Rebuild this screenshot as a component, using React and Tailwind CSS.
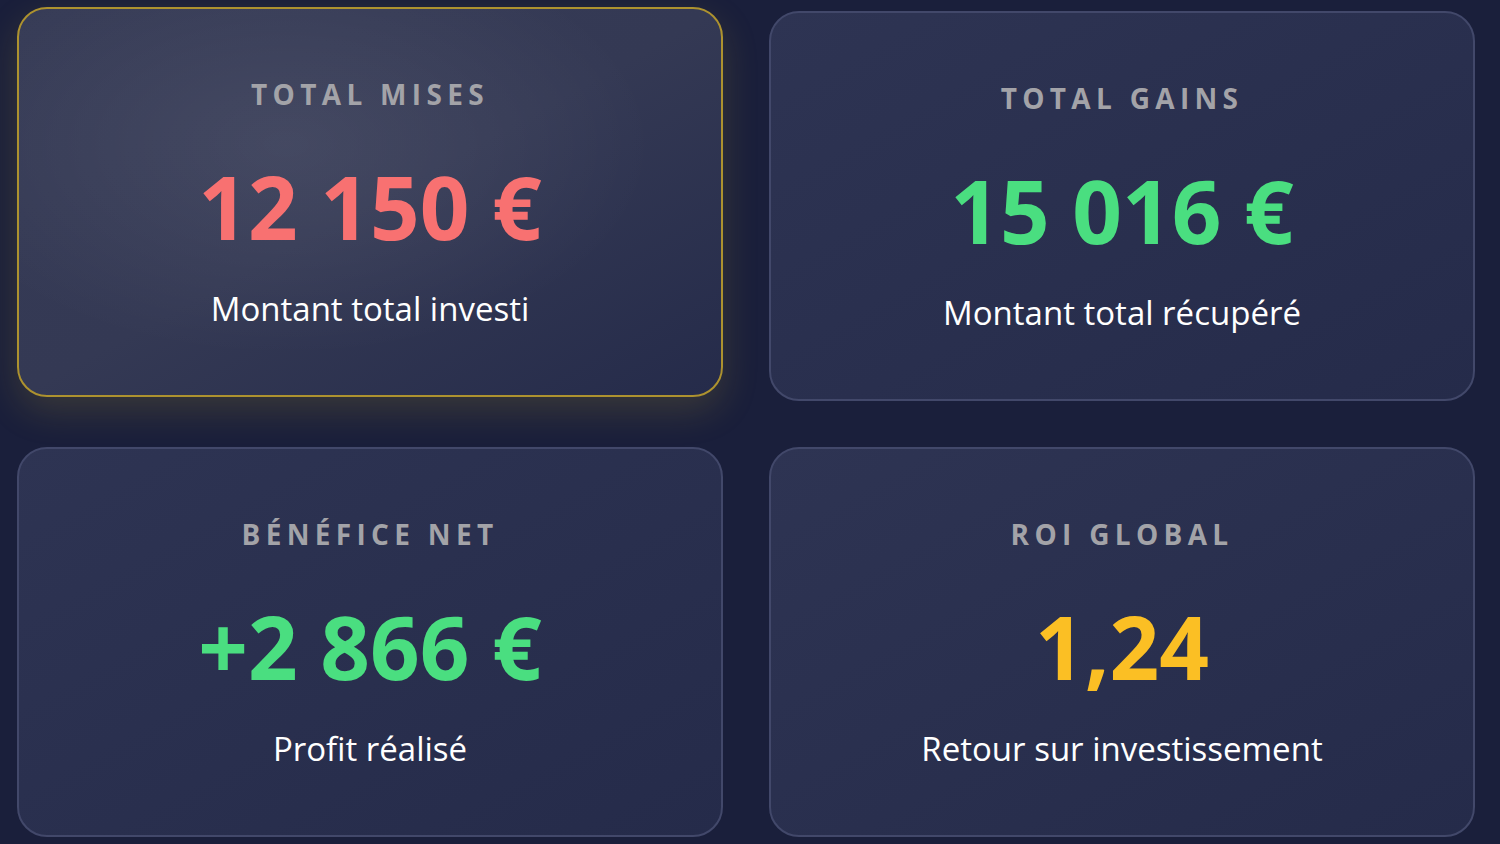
import React from 'react';

const stats = [
    { label: 'TOTAL MISES', value: '12 150 €', sub: 'Montant total investi', color: 'text-[#f87171]', active: true },
    { label: 'TOTAL GAINS', value: '15 016 €', sub: 'Montant total récupéré', color: 'text-[#4ade80]' },
    { label: 'BÉNÉFICE NET', value: '+2 866 €', sub: 'Profit réalisé', color: 'text-[#4ade80]' },
    { label: 'ROI GLOBAL', value: '1,24', sub: 'Retour sur investissement', color: 'text-[#fbbf24]' },
];

function StatCard({ label, value, sub, color, active }) {
    return (
        <div
            className={
                active
                    ? 'relative h-[390px] rounded-[30px] border-2 border-[#ad922f] bg-gradient-to-br from-[#363b56] via-[#343954] to-[#252b4a] shadow-[0_14px_36px_rgba(200,170,50,0.18)] -translate-y-1 flex flex-col items-center justify-center overflow-hidden'
                    : 'relative h-[390px] rounded-[30px] border-2 border-[#42486a] bg-gradient-to-br from-[#2e3453] to-[#252b4a] flex flex-col items-center justify-center overflow-hidden'
            }
        >
            {active && (
                <div className="absolute inset-0 bg-[radial-gradient(ellipse_at_38%_35%,rgba(255,255,255,0.08),transparent_60%)]" />
            )}
            <p className="relative text-[28px] leading-[34px] font-bold tracking-[0.19em] text-[#a3a3a8]">{label}</p>
            <p className={`relative mt-[51px] text-[87px] leading-[88px] font-bold ${color}`}>{value}</p>
            <p className="relative mt-[41px] text-[33px] leading-[36px] text-white">{sub}</p>
        </div>
    );
}

export default function App() {
    return (
        <div className="w-[1500px] h-[844px] overflow-hidden bg-[#1a1f3b] font-['Open_Sans',sans-serif]">
            <div className="grid grid-cols-[706px_706px] gap-[46px] pl-[17px] pt-[11px]">
                {stats.map((s) => (
                    <StatCard key={s.label} {...s} />
                ))}
            </div>
        </div>
    );
}
